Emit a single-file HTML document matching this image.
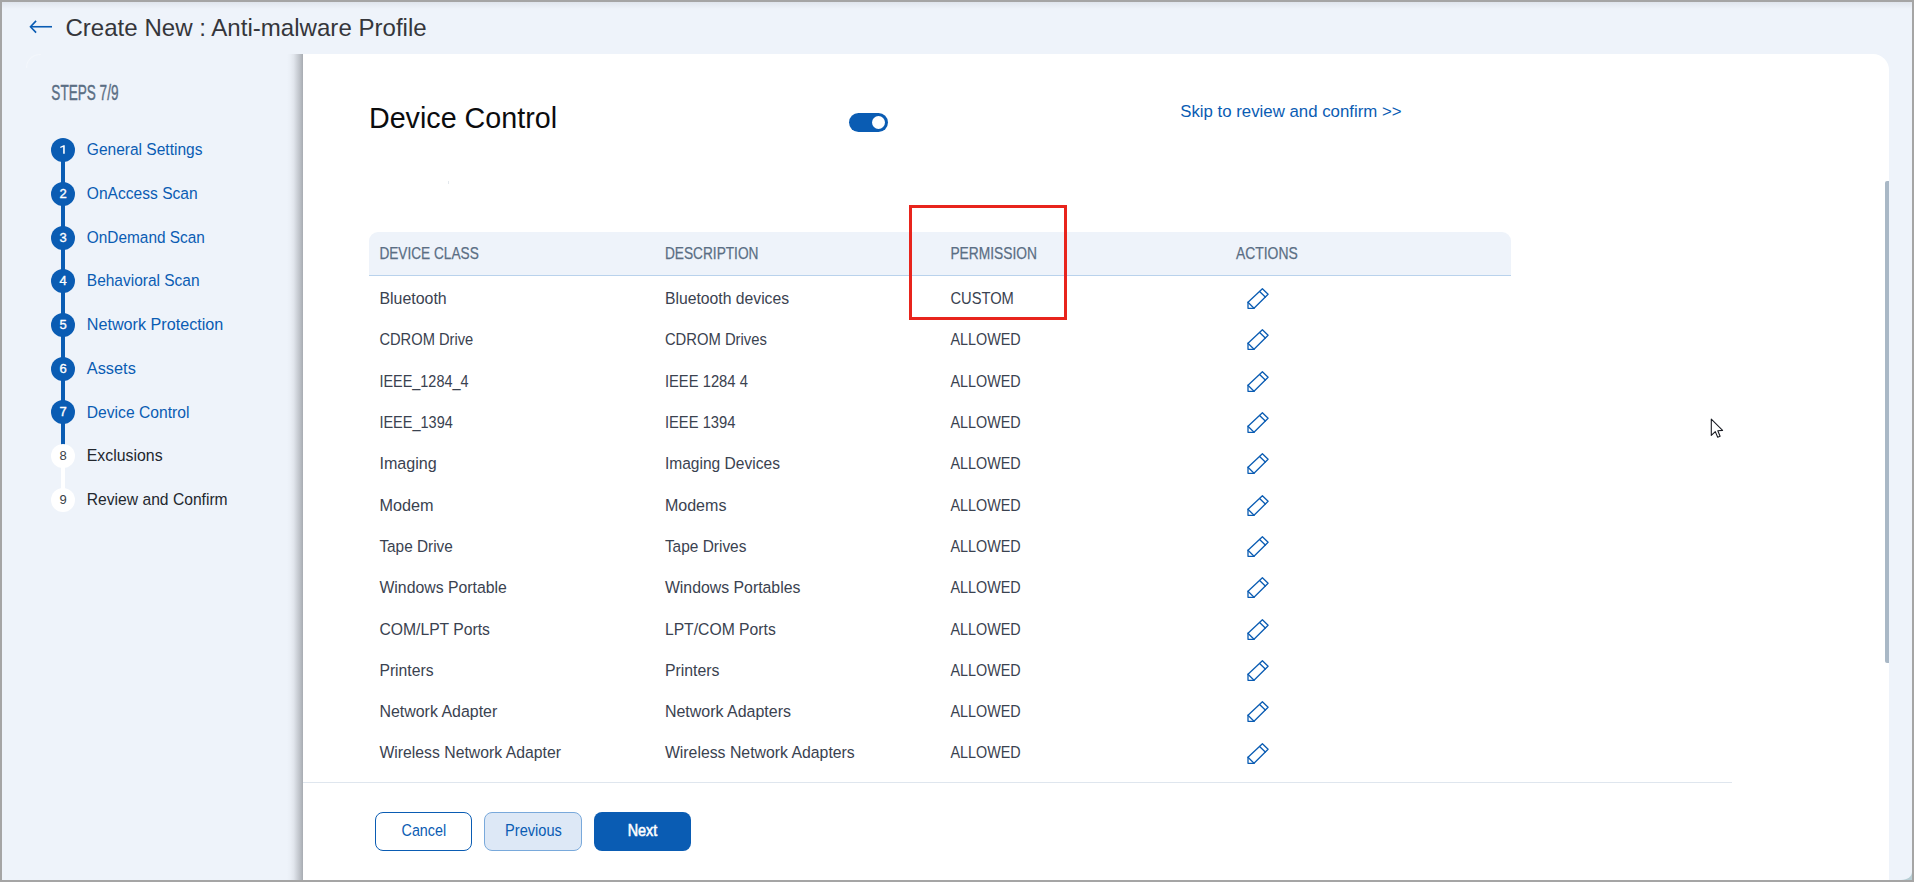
<!DOCTYPE html>
<html><head><meta charset="utf-8"><title>Create New : Anti-malware Profile</title>
<style>
html,body{margin:0;padding:0}
body{width:1914px;height:882px;overflow:hidden;position:relative;background:#eef3fa;font-family:"Liberation Sans",sans-serif}
.t{position:absolute;white-space:nowrap;transform-origin:0 0;display:block}
.frame{position:absolute;left:0;top:0;width:1914px;height:882px;box-sizing:border-box;border:2px solid #a5a5a5;z-index:50;pointer-events:none}
.panel{position:absolute;left:303px;top:54px;width:1586px;height:826px;background:#fff;border-top-right-radius:16px}
.shadow{position:absolute;left:287px;top:54px;width:16px;height:826px;background:linear-gradient(90deg,rgba(10,12,16,0) 0%,rgba(10,12,16,.02) 22%,rgba(10,12,16,.06) 42%,rgba(10,12,16,.14) 62%,rgba(10,12,16,.22) 81%,rgba(10,12,16,.31) 100%)}
.c{position:absolute;left:51px;width:24px;height:24px;border-radius:50%;text-align:center;font-size:13px;line-height:24px;z-index:3}
.c.d{background:#0a5cb3;color:#fff;-webkit-text-stroke:0.35px #fff}
.c.n{background:#fff;color:#3a3f47}
.ln{position:absolute;left:61px;width:4px}
.thead{position:absolute;left:369px;top:232px;width:1142px;height:43px;background:#eef3fa;border-bottom:1px solid #b9d2ec;border-radius:9px 9px 0 0}
.pen{position:absolute;left:1246px}
.red{position:absolute;left:909px;top:205px;width:158px;height:115px;box-sizing:border-box;border:3px solid #e8241c;z-index:6}
.hr{position:absolute;left:303px;top:782px;width:1429px;height:1px;background:#dfe6ee}
.btn{position:absolute;top:812px;height:39px;box-sizing:border-box;border-radius:8px}
.tog{position:absolute;left:849px;top:113px;width:39px;height:19px;border-radius:9.5px;background:#0a5cb3}
.tog i{position:absolute;left:23px;top:3px;width:13px;height:13px;border-radius:50%;background:#fff}
.sb{position:absolute;left:1885px;top:181px;width:4px;height:482px;background:#a9b8c6;border-radius:2px 0 0 2px}
</style></head><body>
<div style="position:absolute;left:0;top:2px;width:1914px;height:7px;background:linear-gradient(180deg,rgba(40,50,70,.075),rgba(40,50,70,.045) 40%,rgba(40,50,70,0))"></div>
<div class="shadow"></div>
<div class="panel"></div>
<svg style="position:absolute;left:28px;top:18px" width="28" height="18" viewBox="0 0 28 18"><g fill="none" stroke="#0a5cb3" stroke-width="1.6" stroke-linejoin="miter"><path d="M2.9 8.75 H24"/><path d="M8.1 2.9 L2.5 8.75 L8.1 14.6"/></g></svg>
<div class="ln" style="top:150px;height:296px;background:#0a5cb3"></div>
<div class="ln" style="top:456px;height:44px;background:#fff"></div>
<div class="c d" style="top:138.0px"><svg width="24" height="24" viewBox="0 0 24 24" style="display:block"><path d="M13.75 7.2 V15.75 H12.15 V9.05 L9.3 10.1 V8.75 L12.6 7.2 Z" fill="#fff"/></svg></div>
<div class="c d" style="top:182.0px">2</div>
<div class="c d" style="top:226.0px">3</div>
<div class="c d" style="top:269.0px">4</div>
<div class="c d" style="top:313.0px">5</div>
<div class="c d" style="top:357.0px">6</div>
<div class="c d" style="top:400.0px">7</div>
<div class="c n" style="top:444.0px">8</div>
<div class="c n" style="top:488.0px">9</div>
<div class="tog"><i></i></div>
<div class="thead"></div>
<svg class="pen" style="top:287.00px" width="24" height="23" viewBox="0 0 24 23"><g fill="none" stroke="#0a5cb3" stroke-width="1.3" stroke-linejoin="round" stroke-linecap="round"><path d="M2 15.3 L16.4 1.8 L22.1 7.3 L8 21.3 L2 21.3 Z"/><path d="M2 15.3 L8 21.3"/><path d="M13.6 4.5 L19.3 10"/></g></svg>
<svg class="pen" style="top:328.32px" width="24" height="23" viewBox="0 0 24 23"><g fill="none" stroke="#0a5cb3" stroke-width="1.3" stroke-linejoin="round" stroke-linecap="round"><path d="M2 15.3 L16.4 1.8 L22.1 7.3 L8 21.3 L2 21.3 Z"/><path d="M2 15.3 L8 21.3"/><path d="M13.6 4.5 L19.3 10"/></g></svg>
<svg class="pen" style="top:369.64px" width="24" height="23" viewBox="0 0 24 23"><g fill="none" stroke="#0a5cb3" stroke-width="1.3" stroke-linejoin="round" stroke-linecap="round"><path d="M2 15.3 L16.4 1.8 L22.1 7.3 L8 21.3 L2 21.3 Z"/><path d="M2 15.3 L8 21.3"/><path d="M13.6 4.5 L19.3 10"/></g></svg>
<svg class="pen" style="top:410.96px" width="24" height="23" viewBox="0 0 24 23"><g fill="none" stroke="#0a5cb3" stroke-width="1.3" stroke-linejoin="round" stroke-linecap="round"><path d="M2 15.3 L16.4 1.8 L22.1 7.3 L8 21.3 L2 21.3 Z"/><path d="M2 15.3 L8 21.3"/><path d="M13.6 4.5 L19.3 10"/></g></svg>
<svg class="pen" style="top:452.28px" width="24" height="23" viewBox="0 0 24 23"><g fill="none" stroke="#0a5cb3" stroke-width="1.3" stroke-linejoin="round" stroke-linecap="round"><path d="M2 15.3 L16.4 1.8 L22.1 7.3 L8 21.3 L2 21.3 Z"/><path d="M2 15.3 L8 21.3"/><path d="M13.6 4.5 L19.3 10"/></g></svg>
<svg class="pen" style="top:493.60px" width="24" height="23" viewBox="0 0 24 23"><g fill="none" stroke="#0a5cb3" stroke-width="1.3" stroke-linejoin="round" stroke-linecap="round"><path d="M2 15.3 L16.4 1.8 L22.1 7.3 L8 21.3 L2 21.3 Z"/><path d="M2 15.3 L8 21.3"/><path d="M13.6 4.5 L19.3 10"/></g></svg>
<svg class="pen" style="top:534.92px" width="24" height="23" viewBox="0 0 24 23"><g fill="none" stroke="#0a5cb3" stroke-width="1.3" stroke-linejoin="round" stroke-linecap="round"><path d="M2 15.3 L16.4 1.8 L22.1 7.3 L8 21.3 L2 21.3 Z"/><path d="M2 15.3 L8 21.3"/><path d="M13.6 4.5 L19.3 10"/></g></svg>
<svg class="pen" style="top:576.24px" width="24" height="23" viewBox="0 0 24 23"><g fill="none" stroke="#0a5cb3" stroke-width="1.3" stroke-linejoin="round" stroke-linecap="round"><path d="M2 15.3 L16.4 1.8 L22.1 7.3 L8 21.3 L2 21.3 Z"/><path d="M2 15.3 L8 21.3"/><path d="M13.6 4.5 L19.3 10"/></g></svg>
<svg class="pen" style="top:617.56px" width="24" height="23" viewBox="0 0 24 23"><g fill="none" stroke="#0a5cb3" stroke-width="1.3" stroke-linejoin="round" stroke-linecap="round"><path d="M2 15.3 L16.4 1.8 L22.1 7.3 L8 21.3 L2 21.3 Z"/><path d="M2 15.3 L8 21.3"/><path d="M13.6 4.5 L19.3 10"/></g></svg>
<svg class="pen" style="top:658.88px" width="24" height="23" viewBox="0 0 24 23"><g fill="none" stroke="#0a5cb3" stroke-width="1.3" stroke-linejoin="round" stroke-linecap="round"><path d="M2 15.3 L16.4 1.8 L22.1 7.3 L8 21.3 L2 21.3 Z"/><path d="M2 15.3 L8 21.3"/><path d="M13.6 4.5 L19.3 10"/></g></svg>
<svg class="pen" style="top:700.20px" width="24" height="23" viewBox="0 0 24 23"><g fill="none" stroke="#0a5cb3" stroke-width="1.3" stroke-linejoin="round" stroke-linecap="round"><path d="M2 15.3 L16.4 1.8 L22.1 7.3 L8 21.3 L2 21.3 Z"/><path d="M2 15.3 L8 21.3"/><path d="M13.6 4.5 L19.3 10"/></g></svg>
<svg class="pen" style="top:741.52px" width="24" height="23" viewBox="0 0 24 23"><g fill="none" stroke="#0a5cb3" stroke-width="1.3" stroke-linejoin="round" stroke-linecap="round"><path d="M2 15.3 L16.4 1.8 L22.1 7.3 L8 21.3 L2 21.3 Z"/><path d="M2 15.3 L8 21.3"/><path d="M13.6 4.5 L19.3 10"/></g></svg>
<div class="red"></div>
<div class="hr"></div>
<div class="btn" style="left:375px;width:97px;background:#fff;border:1px solid #0a5cb3"></div>
<div class="btn" style="left:484px;width:98px;background:#dde8f6;border:1px solid #79a9db"></div>
<div class="btn" style="left:594px;width:97px;background:#0a5cb3"></div>
<div class="sb"></div>
<div style="position:absolute;left:448px;top:181px;width:1px;height:3px;background:#e3e8ed"></div>
<div style="position:absolute;left:26px;top:54px;width:15px;height:14px;box-sizing:border-box;border-top-left-radius:14px;border-left:1px solid rgba(255,255,255,.3);border-top:1px solid rgba(255,255,255,.3)"></div>
<span class="t" style="left:65px;top:12.00px;font-size:24.6px;line-height:32px;color:#35363b;transform:translateX(0.42px) scaleX(0.9790);">Create New : Anti-malware Profile</span>
<span class="t" style="left:51px;top:79.00px;font-size:21.2px;line-height:28px;color:#5a6e84;transform:translateX(0.36px) scaleX(0.6400);-webkit-text-stroke:0.4px #5a6e84;">STEPS 7/9</span>
<span class="t" style="left:86px;top:139.00px;font-size:16.3px;line-height:21px;color:#0a5cb3;transform:translateX(0.80px) scaleX(0.9536);">General Settings</span>
<span class="t" style="left:86px;top:183.00px;font-size:16.3px;line-height:21px;color:#0a5cb3;transform:translateX(0.80px) scaleX(0.9573);">OnAccess Scan</span>
<span class="t" style="left:86px;top:227.00px;font-size:16.3px;line-height:21px;color:#0a5cb3;transform:translateX(0.80px) scaleX(0.9455);">OnDemand Scan</span>
<span class="t" style="left:86px;top:270.00px;font-size:16.3px;line-height:21px;color:#0a5cb3;transform:translateX(0.80px) scaleX(0.9513);">Behavioral Scan</span>
<span class="t" style="left:86px;top:314.00px;font-size:16.3px;line-height:21px;color:#0a5cb3;transform:translateX(0.80px) scaleX(0.9925);">Network Protection</span>
<span class="t" style="left:86px;top:358.00px;font-size:16.3px;line-height:21px;color:#0a5cb3;transform:translateX(0.80px) scaleX(1.0027);">Assets</span>
<span class="t" style="left:86px;top:402.00px;font-size:16.3px;line-height:21px;color:#0a5cb3;transform:translateX(0.80px) scaleX(0.9606);">Device Control</span>
<span class="t" style="left:86px;top:445.00px;font-size:16.3px;line-height:21px;color:#23272e;transform:translateX(0.80px) scaleX(0.9734);">Exclusions</span>
<span class="t" style="left:86px;top:489.00px;font-size:16.3px;line-height:21px;color:#23272e;transform:translateX(0.80px) scaleX(0.9608);">Review and Confirm</span>
<span class="t" style="left:368px;top:98.80px;font-size:29.2px;line-height:38px;color:#0b0c0e;transform:translateX(0.94px) scaleX(0.9826);">Device Control</span>
<span class="t" style="left:1180px;top:100.70px;font-size:16.3px;line-height:21px;color:#0a5cb3;transform:translateX(0.18px) scaleX(1.0323);">Skip to review and confirm &gt;&gt;</span>
<span class="t" style="left:379px;top:243.40px;font-size:17px;line-height:22px;color:#5a6e84;transform:translateX(0.40px) scaleX(0.8027);-webkit-text-stroke:0.25px #5a6e84;">DEVICE CLASS</span>
<span class="t" style="left:664px;top:243.40px;font-size:17px;line-height:22px;color:#5a6e84;transform:translateX(0.90px) scaleX(0.8053);-webkit-text-stroke:0.25px #5a6e84;">DESCRIPTION</span>
<span class="t" style="left:950px;top:243.40px;font-size:17px;line-height:22px;color:#5a6e84;transform:translateX(0.40px) scaleX(0.8103);-webkit-text-stroke:0.25px #5a6e84;">PERMISSION</span>
<span class="t" style="left:1235px;top:243.40px;font-size:17px;line-height:22px;color:#5a6e84;transform:translateX(0.90px) scaleX(0.8179);-webkit-text-stroke:0.25px #5a6e84;">ACTIONS</span>
<span class="t" style="left:379px;top:288.00px;font-size:16.3px;line-height:21px;color:#3a4250;transform:translateX(0.40px) scaleX(0.9786);">Bluetooth</span>
<span class="t" style="left:664px;top:288.00px;font-size:16.3px;line-height:21px;color:#3a4250;transform:translateX(0.90px) scaleX(0.9664);">Bluetooth devices</span>
<span class="t" style="left:950px;top:288.00px;font-size:16.3px;line-height:21px;color:#3a4250;transform:translateX(0.40px) scaleX(0.9030);">CUSTOM</span>
<span class="t" style="left:379px;top:329.00px;font-size:16.3px;line-height:21px;color:#3a4250;transform:translateX(0.40px) scaleX(0.9019);">CDROM Drive</span>
<span class="t" style="left:664px;top:329.00px;font-size:16.3px;line-height:21px;color:#3a4250;transform:translateX(0.90px) scaleX(0.9088);">CDROM Drives</span>
<span class="t" style="left:950px;top:329.00px;font-size:16.3px;line-height:21px;color:#3a4250;transform:translateX(0.40px) scaleX(0.8827);">ALLOWED</span>
<span class="t" style="left:379px;top:371.00px;font-size:16.3px;line-height:21px;color:#3a4250;transform:translateX(0.40px) scaleX(0.8869);">IEEE_1284_4</span>
<span class="t" style="left:664px;top:371.00px;font-size:16.3px;line-height:21px;color:#3a4250;transform:translateX(0.90px) scaleX(0.9073);">IEEE 1284 4</span>
<span class="t" style="left:950px;top:371.00px;font-size:16.3px;line-height:21px;color:#3a4250;transform:translateX(0.40px) scaleX(0.8827);">ALLOWED</span>
<span class="t" style="left:379px;top:412.00px;font-size:16.3px;line-height:21px;color:#3a4250;transform:translateX(0.40px) scaleX(0.8906);">IEEE_1394</span>
<span class="t" style="left:664px;top:412.00px;font-size:16.3px;line-height:21px;color:#3a4250;transform:translateX(0.90px) scaleX(0.9066);">IEEE 1394</span>
<span class="t" style="left:950px;top:412.00px;font-size:16.3px;line-height:21px;color:#3a4250;transform:translateX(0.40px) scaleX(0.8827);">ALLOWED</span>
<span class="t" style="left:379px;top:453.00px;font-size:16.3px;line-height:21px;color:#3a4250;transform:translateX(0.40px) scaleX(0.9907);">Imaging</span>
<span class="t" style="left:664px;top:453.00px;font-size:16.3px;line-height:21px;color:#3a4250;transform:translateX(0.90px) scaleX(0.9559);">Imaging Devices</span>
<span class="t" style="left:950px;top:453.00px;font-size:16.3px;line-height:21px;color:#3a4250;transform:translateX(0.40px) scaleX(0.8827);">ALLOWED</span>
<span class="t" style="left:379px;top:495.00px;font-size:16.3px;line-height:21px;color:#3a4250;transform:translateX(0.40px) scaleX(0.9966);">Modem</span>
<span class="t" style="left:664px;top:495.00px;font-size:16.3px;line-height:21px;color:#3a4250;transform:translateX(0.90px) scaleX(0.9858);">Modems</span>
<span class="t" style="left:950px;top:495.00px;font-size:16.3px;line-height:21px;color:#3a4250;transform:translateX(0.40px) scaleX(0.8827);">ALLOWED</span>
<span class="t" style="left:379px;top:536.00px;font-size:16.3px;line-height:21px;color:#3a4250;transform:translateX(0.40px) scaleX(0.9434);">Tape Drive</span>
<span class="t" style="left:664px;top:536.00px;font-size:16.3px;line-height:21px;color:#3a4250;transform:translateX(0.90px) scaleX(0.9481);">Tape Drives</span>
<span class="t" style="left:950px;top:536.00px;font-size:16.3px;line-height:21px;color:#3a4250;transform:translateX(0.40px) scaleX(0.8827);">ALLOWED</span>
<span class="t" style="left:379px;top:577.00px;font-size:16.3px;line-height:21px;color:#3a4250;transform:translateX(0.40px) scaleX(0.9718);">Windows Portable</span>
<span class="t" style="left:664px;top:577.00px;font-size:16.3px;line-height:21px;color:#3a4250;transform:translateX(0.90px) scaleX(0.9725);">Windows Portables</span>
<span class="t" style="left:950px;top:577.00px;font-size:16.3px;line-height:21px;color:#3a4250;transform:translateX(0.40px) scaleX(0.8827);">ALLOWED</span>
<span class="t" style="left:379px;top:619.00px;font-size:16.3px;line-height:21px;color:#3a4250;transform:translateX(0.40px) scaleX(0.9646);">COM/LPT Ports</span>
<span class="t" style="left:664px;top:619.00px;font-size:16.3px;line-height:21px;color:#3a4250;transform:translateX(0.90px) scaleX(0.9652);">LPT/COM Ports</span>
<span class="t" style="left:950px;top:619.00px;font-size:16.3px;line-height:21px;color:#3a4250;transform:translateX(0.40px) scaleX(0.8827);">ALLOWED</span>
<span class="t" style="left:379px;top:660.00px;font-size:16.3px;line-height:21px;color:#3a4250;transform:translateX(0.40px) scaleX(0.9649);">Printers</span>
<span class="t" style="left:664px;top:660.00px;font-size:16.3px;line-height:21px;color:#3a4250;transform:translateX(0.90px) scaleX(0.9736);">Printers</span>
<span class="t" style="left:950px;top:660.00px;font-size:16.3px;line-height:21px;color:#3a4250;transform:translateX(0.40px) scaleX(0.8827);">ALLOWED</span>
<span class="t" style="left:379px;top:701.00px;font-size:16.3px;line-height:21px;color:#3a4250;transform:translateX(0.40px) scaleX(0.9790);">Network Adapter</span>
<span class="t" style="left:664px;top:701.00px;font-size:16.3px;line-height:21px;color:#3a4250;transform:translateX(0.90px) scaleX(0.9812);">Network Adapters</span>
<span class="t" style="left:950px;top:701.00px;font-size:16.3px;line-height:21px;color:#3a4250;transform:translateX(0.40px) scaleX(0.8827);">ALLOWED</span>
<span class="t" style="left:379px;top:742.00px;font-size:16.3px;line-height:21px;color:#3a4250;transform:translateX(0.40px) scaleX(0.9692);">Wireless Network Adapter</span>
<span class="t" style="left:664px;top:742.00px;font-size:16.3px;line-height:21px;color:#3a4250;transform:translateX(0.90px) scaleX(0.9714);">Wireless Network Adapters</span>
<span class="t" style="left:950px;top:742.00px;font-size:16.3px;line-height:21px;color:#3a4250;transform:translateX(0.40px) scaleX(0.8827);">ALLOWED</span>
<span class="t" style="left:401px;top:820.00px;font-size:16.3px;line-height:21px;color:#0a5cb3;transform:translateX(0.54px) scaleX(0.8798);">Cancel</span>
<span class="t" style="left:505px;top:820.00px;font-size:16.3px;line-height:21px;color:#0a5cb3;transform:translateX(0.12px) scaleX(0.8956);">Previous</span>
<span class="t" style="left:627px;top:820.00px;font-size:16.3px;line-height:21px;color:#ffffff;transform:translateX(0.73px) scaleX(0.8834);-webkit-text-stroke:0.55px #fff;">Next</span>
<svg style="position:absolute;left:1709px;top:417px;z-index:9" width="16" height="23" viewBox="0 0 16 23"><path d="M2.3 2.2 L2.3 18.4 L6.3 14.6 L8.7 20.2 L11.1 19.2 L8.8 13.8 L13.6 13.4 Z" fill="#fff" stroke="#1a1c24" stroke-width="1.1" stroke-linejoin="round"/></svg>
<svg style="position:absolute;left:1901px;top:872px;z-index:49" width="11" height="8" viewBox="0 0 11 8"><path d="M11 0 V8 H0 C7 7.6 10.6 5 11 0 Z" fill="#b7ced4"/></svg>
<div class="frame"></div>
</body></html>
